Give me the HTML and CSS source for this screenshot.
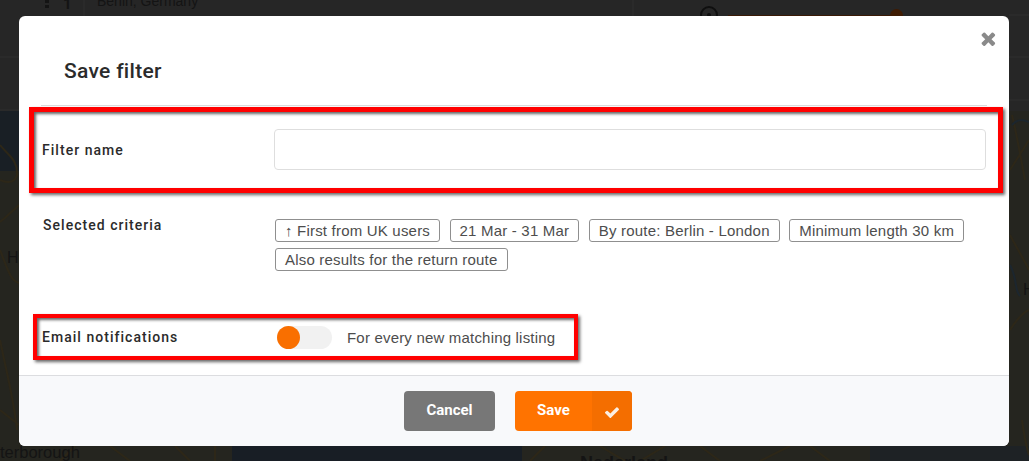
FILE: index.html
```html
<!DOCTYPE html>
<html lang="en">
<head>
<meta charset="utf-8">
<title>Save filter</title>
<link rel="stylesheet" href="styles.css">
</head>
<body>
<div class="backdrop-map">
  <svg class="bg-art" viewBox="0 0 1029 461" width="1029" height="461">
    <rect x="0" y="111" width="1029" height="350" fill="#25251f"/>
    <rect x="0" y="111" width="19" height="60" fill="#191f25"/>
    <rect x="232" y="446" width="290" height="15" fill="#181e25"/>
    <rect x="870" y="446" width="159" height="15" fill="#1e2225"/>
    <path d="M0 57H19M1009 15H1029M1009 57H1029M1009 100H1029M84 0V16M633 0V16M0 110H19" stroke="#2e2e2e" fill="none"/>
    <g stroke="#2d2718" stroke-width="2" fill="none">
      <path d="M0 145C8 155 18 160 17 175 14 185 4 182 0 180"/>
      <path d="M0 222C8 215 14 210 19 205"/>
      <path d="M0 250C8 270 10 280 19 283"/>
      <path d="M0 340C6 370 14 400 17 430M0 410L19 425"/>
      <path d="M1012 115C1018 140 1022 165 1025 180M1029 140L1010 170"/>
      <path d="M1010 235C1018 250 1024 260 1029 270"/>
      <path d="M1010 330C1016 320 1024 312 1029 310"/>
      <path d="M1022 420C1024 435 1026 445 1029 455"/>
      <path d="M60 461L75 446M110 446L130 461M175 446L190 461M215 446V461M530 461L545 446M600 446L625 461M640 461L665 446M700 446L720 461M760 461L790 446M810 446L830 461"/>
    </g>
    <g stroke="#1c262e" stroke-width="2" fill="none">
      <path d="M1012 125C1018 118 1024 120 1029 122"/>
      <path d="M1010 265C1018 280 1014 290 1020 296"/>
    </g>
    <path d="M38 0H42V3H38ZM38 5H42V8H38Z" fill="#141414" transform="translate(7 0)"/>
    <circle cx="709" cy="15" r="8" fill="none" stroke="#0f0f0f" stroke-width="2"/>
    <circle cx="709" cy="15" r="2" fill="#0f0f0f"/>
    <rect x="728" y="15" width="165" height="1" fill="#3a1a05"/>
    <circle cx="896.5" cy="15.5" r="6.5" fill="#3f1b02"/>
  </svg>
  <span class="bg-num">1</span><span class="bg-city">Berlin, Germany</span>
  <span class="bg-h-left">H</span><span class="bg-h-right">H</span>
  <span class="bg-peter">terborough</span><span class="bg-norwich">Norwich</span><span class="bg-ned">Nederland</span>
</div>
<main class="modal">
  <button class="close" aria-label="Close">
    <svg viewBox="238 238 1252 1316" width="16" height="15"><path fill="#8a8a8a" d="M1490 1322q0 40-28 68l-136 136q-28 28-68 28t-68-28l-294-294-294 294q-28 28-68 28t-68-28l-136-136q-28-28-28-68t28-68l294-294-294-294q-28-28-28-68t28-68l136-136q28-28 68-28t68 28l294 294 294-294q28-28 68-28t68 28l136 136q28 28 28 68t-28 68l-294 294 294 294q28 28 28 68z"/></svg>
  </button>
  <header class="modal-head"><h1>Save filter</h1></header>
  <section class="modal-body">
    <div class="row row-name">
      <label class="label">Filter name</label>
      <input class="text-input" type="text">
    </div>
    <div class="row row-criteria">
      <div class="label">Selected criteria</div>
      <div class="chips">
        <span class="chip">↑ First from UK users</span>
        <span class="chip">21 Mar - 31 Mar</span>
        <span class="chip">By route: Berlin - London</span>
        <span class="chip">Minimum length 30 km</span>
        <span class="chip">Also results for the return route</span>
      </div>
    </div>
    <div class="row row-email">
      <div class="label">Email notifications</div>
      <span class="toggle"><span class="knob"></span></span>
      <span class="toggle-text">For every new matching listing</span>
    </div>
  </section>
  <footer class="modal-foot">
    <button class="btn btn-cancel">Cancel</button>
    <button class="btn btn-save"><span class="save-text">Save</span><span class="save-icon"><svg viewBox="121 310 1550 1184" width="14" height="11"><path fill="#fbeee2" d="M1671 566q0 40-28 68l-724 724-136 136q-28 28-68 28t-68-28l-136-136-362-362q-28-28-28-68t28-68l136-136q28-28 68-28t68 28l294 295 656-657q28-28 68-28t68 28l136 136q28 28 28 68z"/></svg></span></button>
  </footer>
</main>
<div class="mark mark-name"></div>
<div class="mark mark-email"></div>
</body>
</html>
```
FILE: styles.css
```css
* { box-sizing: border-box; }
html, body { margin: 0; height: 100%; }
body {
  width: 1029px;
  height: 461px;
  overflow: hidden;
  background: #262626;
  padding: 16px 20px 15px 19px;
  font-family: "Liberation Sans", Arial, sans-serif;
  position: relative;
}
.backdrop-map { position: absolute; inset: 0; color: #141414; }
.bg-art { position: absolute; left: 0; top: 0; }
.backdrop-map span { position: absolute; white-space: nowrap; }
.bg-num { left: 63px; top: -5px; font: 700 15px "Roboto", sans-serif; }
.bg-city { left: 97px; top: -7px; font-size: 14px; }
.bg-h-left { left: 7px; top: 249px; font-size: 16px; }
.bg-h-right { left: 1023px; top: 281px; font-size: 16px; }
.bg-peter { left: 0; top: 443px; font-size: 16.5px; }
.bg-norwich { left: 156px; top: 432px; font-size: 15px; }
.bg-ned { left: 580px; top: 453px; font-size: 18px; font-weight: 700; }

.modal {
  position: relative;
  width: 990px;
  height: 430px;
  background: #fff;
  border-radius: 6px;
  display: flex;
  flex-direction: column;
  overflow: hidden;
}
.close {
  position: absolute;
  top: 15px;
  right: 13px;
  padding: 0;
  border: 0;
  background: none;
  line-height: 0;
}
.modal-head {
  height: 90px;
  margin: 0 22px;
  padding: 43px 0 0 23px;
  border-bottom: 1px solid #dcdcdc;
}
h1 {
  margin: 0;
  font: 500 21px/24px "Roboto", sans-serif;
  letter-spacing: .3px;
  color: #2b2b2b;
}
.modal-body { flex: 1; padding: 0 23px 0 24px; }
.row { display: flex; }
.label {
  width: 231px;
  flex: none;
  font: 500 14px/18px "Roboto", sans-serif;
  letter-spacing: 1.03px;
  color: #2b2b2b;
}
.row-name { height: 85px; align-items: center; padding-top: 2px; }
.row-name .label { margin-left: -1px; width: 232px; }
.text-input {
  flex: 1;
  height: 41px;
  border: 1px solid #dedede;
  border-radius: 4px;
  background: #fff;
}
.row-criteria { height: 134px; padding-top: 25px; }
.chips { display: flex; flex-wrap: wrap; align-content: flex-start; gap: 6px 9.5px; padding-top: 3px; margin-left: 1px; }
.chip {
  height: 23px;
  padding: 0 9px;
  border: 1px solid #8f8f8f;
  border-radius: 3px;
  font-size: 15px;
  letter-spacing: .2px;
  line-height: 21px;
  color: #4d4d4d;
}
.row-email { align-items: center; height: 24px; }
.row-email .label { margin-left: -1px; width: 235px; }
.toggle {
  position: relative;
  width: 55px;
  height: 23px;
  border-radius: 12px;
  background: #f1f1f1;
  flex: none;
}
.knob {
  position: absolute;
  left: 0;
  top: 0;
  width: 23px;
  height: 23px;
  border-radius: 50%;
  background: #f96f00;
}
.toggle-text { margin-left: 15px; font-size: 15px; letter-spacing: .19px; color: #4d4d4d; }
.modal-foot {
  height: 71px;
  background: #f8f9fb;
  border-top: 1px solid #dcdde0;
  display: flex;
  justify-content: center;
  align-items: flex-start;
  gap: 20px;
  padding: 15px 0 0 8px;
}
.btn {
  height: 40px;
  border: 0;
  border-radius: 4px;
  padding: 0;
  color: #fff;
  font: 700 15px "Roboto", sans-serif;
}
.btn-cancel { width: 91px; background: #777; padding-bottom: 2px; }
.btn-save { width: 117px; background: #ff7300; display: flex; align-items: stretch; overflow: hidden; }
.save-text { width: 77px; line-height: 38px; }
.save-icon { flex: 1; background: #f46e00; display: flex; align-items: center; justify-content: center; padding-top: 2px; }

.mark { position: absolute; border-style: solid; border-color: #f00; box-shadow: 2px 2px 3px rgba(0,0,0,.6), inset 2px 2px 3px rgba(0,0,0,.6); }
.mark-name { left: 29px; top: 107px; width: 974px; height: 86px; border-width: 5px; }
.mark-email { left: 33px; top: 314px; width: 545px; height: 46px; border-width: 4px; }
```
